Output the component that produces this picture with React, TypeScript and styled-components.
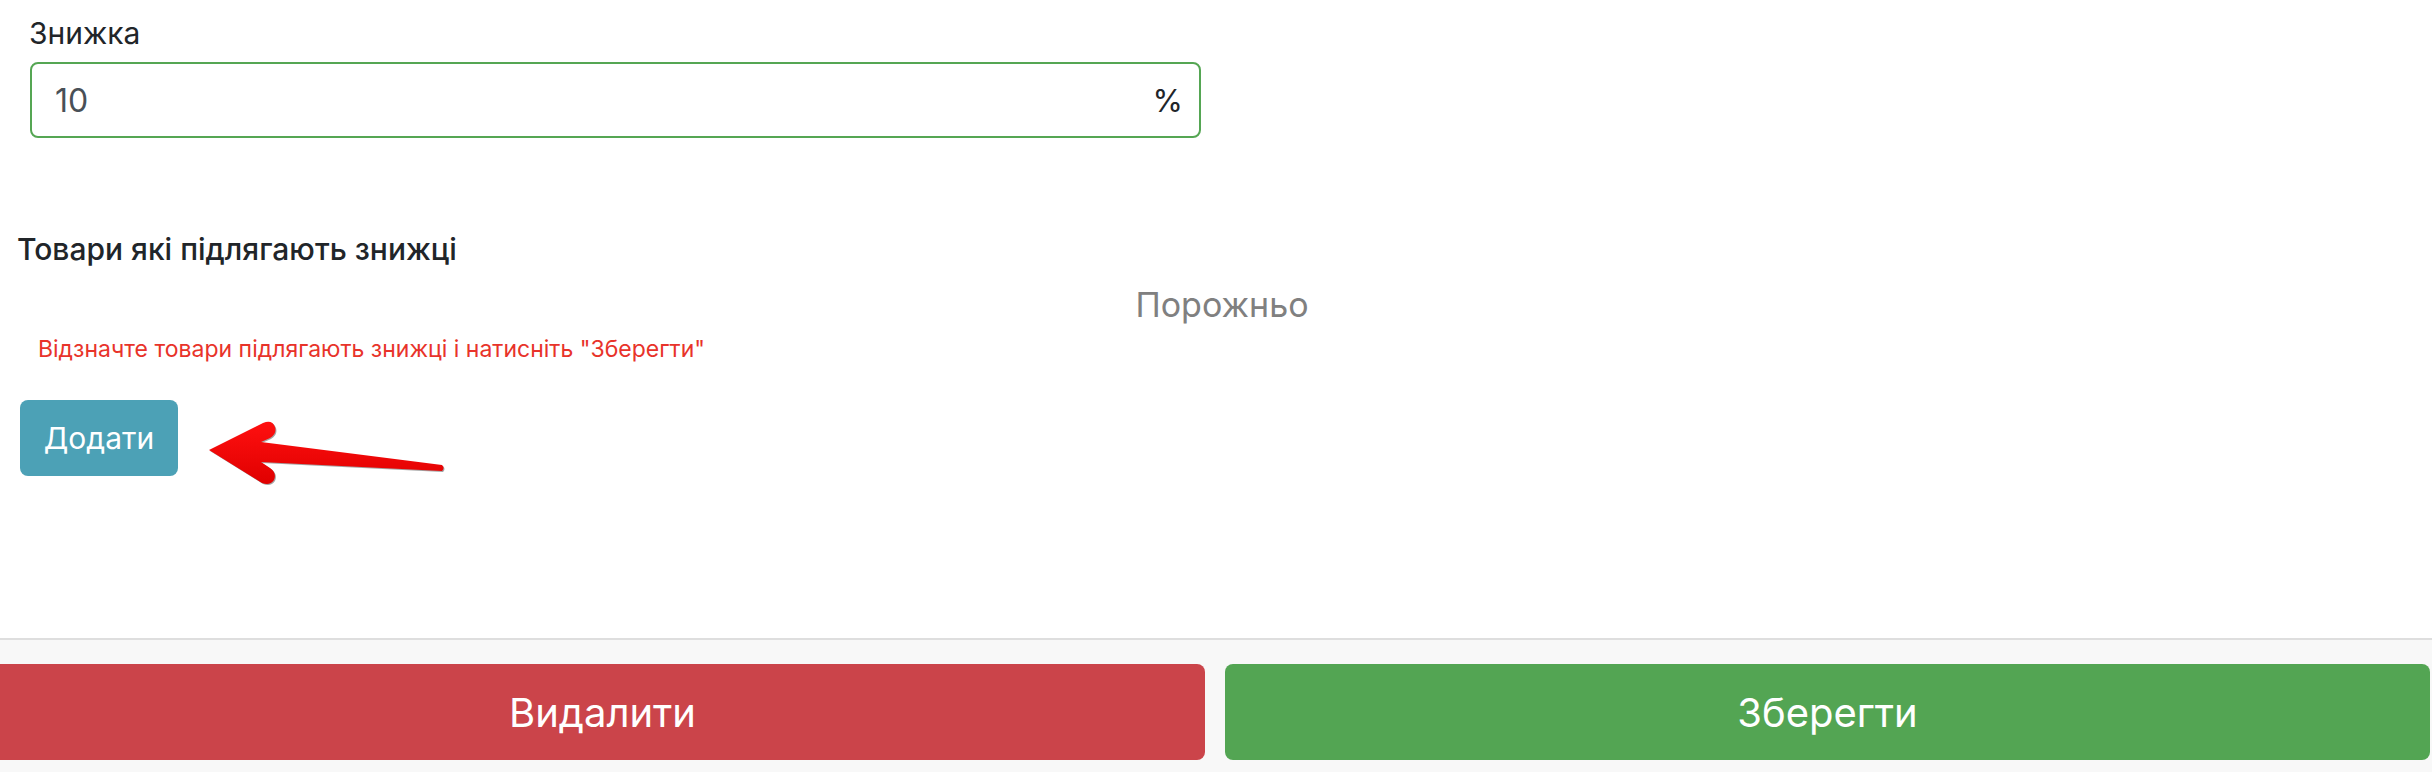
import { useState } from "react";
import styled, { createGlobalStyle } from "styled-components";

// #region styles

const GlobalStyle = createGlobalStyle`
  html, body {
    margin: 0;
    padding: 0;
    background: #ffffff;
  }
  body {
    font-family: "Inter", "Liberation Sans", sans-serif;
    color: #212529;
  }
  * {
    box-sizing: border-box;
  }
`;

const Page = styled.div`
  width: 2432px;
  height: 772px;
  display: flex;
  flex-direction: column;
  overflow: hidden;
`;

const Content = styled.div`
  height: 638px;
  display: flex;
  flex-direction: column;
`;

const DiscountGroup = styled.div`
  padding: 12px 0 0 29px;
  width: 1201px;
`;

const Label = styled.label`
  display: block;
  font-size: 30px;
  line-height: 42px;
  margin: 0 0 8px 0;
`;

const InputBox = styled.div`
  display: flex;
  align-items: center;
  height: 76px;
  margin-left: 1px;
  border: 2px solid #55a653;
  border-radius: 8px;
  padding: 0 16px 0 23px;
`;

const Field = styled.input`
  flex: 1;
  border: none;
  outline: none;
  background: transparent;
  font-family: inherit;
  font-size: 32px;
  color: #495057;
  padding: 0;
`;

const Suffix = styled.span`
  font-size: 31px;
  color: #212529;
`;

const SectionTitle = styled.h6`
  margin: 93px 0 0 0;
  padding-left: 17px;
  font-size: 30px;
  font-weight: 500;
  line-height: 1.2;
`;

const Empty = styled.div`
  margin-top: 18px;
  padding-left: 12px;
  text-align: center;
  font-size: 34px;
  line-height: 1.2;
  color: #808080;
`;

const Hint = styled.div`
  margin-top: 5px;
  padding-left: 38px;
  font-size: 23px;
  line-height: 36px;
  color: #e8332a;
`;

const ActionRow = styled.div`
  position: relative;
  margin-top: 33px;
  padding-left: 20px;
`;

const AddButton = styled.button`
  width: 158px;
  height: 76px;
  border: none;
  border-radius: 8px;
  background: #4ca1b6;
  color: #ffffff;
  font-family: inherit;
  font-size: 30px;
  cursor: pointer;
`;

const Pointer = styled.svg`
  position: absolute;
  left: 200px;
  top: 15px;
  filter: drop-shadow(1px 1px 0.6px rgba(90, 90, 90, 0.55));
`;

const Footer = styled.div`
  flex: 1;
  display: flex;
  gap: 20px;
  padding: 24px 2px 12px 0;
  border-top: 2px solid #dedede;
  background: #f8f8f8;
`;

const FooterButton = styled.button<{ $tone: "danger" | "success"; $flush?: boolean }>`
  flex: 1;
  border: none;
  border-radius: ${(p) => (p.$flush ? "0 8px 8px 0" : "8px")};
  background: ${(p) => (p.$tone === "danger" ? "#cb444a" : "#53a553")};
  color: #ffffff;
  font-family: inherit;
  font-size: 40px;
  cursor: pointer;
`;

// #endregion

function RedArrow() {
  return (
    <Pointer width="260" height="80" viewBox="0 0 260 80">
      <defs>
        <linearGradient id="arrowFill" x1="0" y1="0" x2="0" y2="1">
          <stop offset="0" stopColor="#ff1010" />
          <stop offset="1" stopColor="#e00000" />
        </linearGradient>
      </defs>
      <path
        d="M 9 35 L 63 8 Q 72 4 75 12 Q 77 19 70 23 L 61 27 L 242 50 Q 245 53 242 56 L 61 47 L 70 53 Q 77 58 74 65 Q 70 71 62 68 Z"
        fill="url(#arrowFill)"
      />
    </Pointer>
  );
}

export default function App() {
  const [discount, setDiscount] = useState("10");

  return (
    <>
      <GlobalStyle />
      <Page>
        <Content>
          <DiscountGroup>
            <Label htmlFor="discount">{"Знижка"}</Label>
            <InputBox>
              <Field
                id="discount"
                value={discount}
                onChange={(e) => setDiscount(e.target.value)}
              />
              <Suffix>{"%"}</Suffix>
            </InputBox>
          </DiscountGroup>
          <SectionTitle>{"Товари які підлягають знижці"}</SectionTitle>
          <Empty>{"Порожньо"}</Empty>
          <Hint>{'Відзначте товари підлягають знижці і натисніть "Зберегти"'}</Hint>
          <ActionRow>
            <AddButton>{"Додати"}</AddButton>
            <RedArrow />
          </ActionRow>
        </Content>
        <Footer>
          <FooterButton $tone="danger" $flush>
            {"Видалити"}
          </FooterButton>
          <FooterButton $tone="success">{"Зберегти"}</FooterButton>
        </Footer>
      </Page>
    </>
  );
}
